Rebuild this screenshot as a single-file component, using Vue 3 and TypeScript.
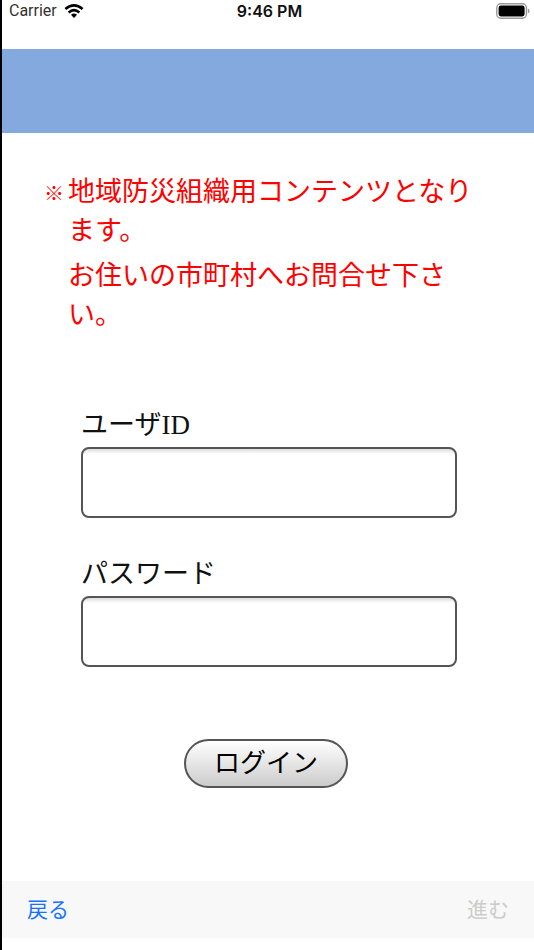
<script setup lang="ts">
import { ref } from 'vue'

const userId = ref<string>('')
const password = ref<string>('')

const notices: string[] = [
  '地域防災組織用コンテンツとなります。',
  'お住いの市町村へお問合せ下さい。',
]
</script>

<template>
  <div class="screen">
    <div class="status">
      <div class="carrier">
        <span>Carrier</span>
        <svg class="wifi" viewBox="0 0 18 13" aria-hidden="true">
          <path d="M1 4.6 Q9 -2 17 4.6" />
          <path d="M4 7.8 Q9 3.6 14 7.8" />
          <path class="dot" d="M6.2 10 Q9 7.8 11.8 10 L9 12.9 Z" />
        </svg>
      </div>
      <time class="clock">9:46 PM</time>
      <svg class="battery" viewBox="0 0 34 16" aria-hidden="true">
        <rect class="case" x="0.8" y="0.8" width="29.6" height="14.4" rx="4" />
        <rect x="2.6" y="2.6" width="26" height="10.8" rx="2.4" />
        <path class="cap" d="M31.8 5.6 Q33.6 6.4 33.6 8 Q33.6 9.6 31.8 10.4 Z" />
      </svg>
    </div>

    <header class="banner"></header>

    <main class="content">
      <div class="notice">
        <span class="mark">※</span>
        <div class="lines">
          <p v-for="line in notices" :key="line">{{ line }}</p>
        </div>
      </div>

      <form class="login" @submit.prevent>
        <div class="field">
          <label for="user-id">ユーザID</label>
          <input id="user-id" v-model="userId" type="text" autocomplete="username" />
        </div>
        <div class="field">
          <label for="password">パスワード</label>
          <input id="password" v-model="password" type="password" autocomplete="current-password" />
        </div>
        <div class="actions">
          <button class="submit" type="submit">ログイン</button>
        </div>
      </form>
    </main>

    <footer class="toolbar">
      <button type="button" class="nav">戻る</button>
      <button type="button" class="nav" disabled>進む</button>
    </footer>
  </div>
</template>

<style>
body {
  background: #fff;
}
</style>

<style scoped>
.screen {
  box-sizing: border-box;
  display: flex;
  flex-direction: column;
  min-height: 100vh;
  padding-bottom: 12px;
  border-left: 2px solid #000;
  font-family: "Liberation Serif", "Noto Sans CJK JP", sans-serif;
  color: #111;
}

.status {
  display: grid;
  grid-template-columns: 1fr auto 1fr;
  align-items: center;
  height: 22px;
  margin-bottom: 27px;
  padding: 0 4px 0 7px;
  font-family: Inter, Roboto, sans-serif;
  font-size: 16px;
  line-height: 22px;
}

.carrier {
  display: flex;
  align-items: center;
  gap: 7px;
  font-family: Roboto, sans-serif;
  color: #333;
}

.wifi {
  width: 20px;
  height: 14px;
  fill: none;
  stroke: #000;
  stroke-width: 2.4;
}

.wifi .dot {
  fill: #000;
  stroke: none;
}

.clock {
  font-weight: 600;
}

.battery {
  justify-self: end;
  width: 34px;
  height: 16px;
}

.battery .case {
  fill: #fff;
  stroke: #999;
  stroke-width: 1.4;
}

.battery .cap {
  fill: #999;
}

.banner {
  height: 84px;
  background: #83a9de;
}

.content {
  flex: 1;
  padding: 40px 42px 0;
}

.notice {
  display: flex;
  gap: 4px;
  color: #f00;
  font-size: 27px;
  line-height: 39px;
}

.mark {
  flex: none;
  font-family: "Noto Sans CJK JP", sans-serif;
  font-size: 20px;
}

.lines {
  display: flex;
  flex-direction: column;
  gap: 6px;
}

.lines p {
  margin: 0;
}

.login {
  display: flex;
  flex-direction: column;
  gap: 36px;
  padding: 70px 35px 0 37px;
}

.field {
  display: flex;
  flex-direction: column;
  gap: 2px;
}

.field label {
  font-size: 27px;
  line-height: 40px;
}

.field input {
  box-sizing: border-box;
  width: 100%;
  height: 71px;
  padding: 0 12px;
  border: 2px solid #555;
  border-radius: 8px;
  background: linear-gradient(#ddd, #fff 5px);
  font: inherit;
  font-size: 27px;
}

.actions {
  display: flex;
  justify-content: center;
  padding: 36px 6px 0 0;
}

.submit {
  height: 49px;
  padding: 0 28px;
  border: 2px solid #555;
  border-radius: 25px;
  background: linear-gradient(#fff, #ccc);
  color: #000;
  font: inherit;
  font-size: 26px;
  line-height: 40px;
}

.toolbar {
  display: flex;
  align-items: center;
  justify-content: space-between;
  height: 57px;
  padding: 0 25px;
  background: #f8f8f8;
}

.nav {
  padding: 0;
  border: 0;
  background: none;
  color: #1673ff;
  font: inherit;
  font-size: 21px;
  line-height: 30px;
}

.nav:disabled {
  color: #ccc;
}
</style>
